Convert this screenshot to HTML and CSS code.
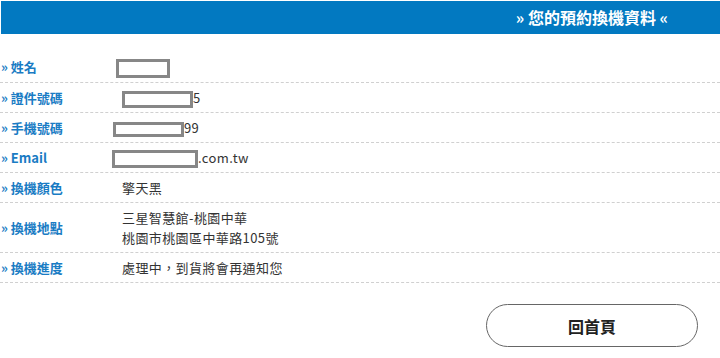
FILE: index.html
```html
<!DOCTYPE html>
<html>
<head>
    <title>您的預約換機資料</title>
    <link rel="stylesheet" href="styles.css">
</head>
<body>
    <div class="title-bar">» 您的預約換機資料 «</div>

    <div class="info-list">
        <div class="info-row">
            <div class="info-label">» 姓名</div>
            <div class="info-value"><span class="mask mask-name"></span></div>
        </div>
        <div class="info-row">
            <div class="info-label">» 證件號碼</div>
            <div class="info-value"><span class="mask mask-id"></span>5</div>
        </div>
        <div class="info-row">
            <div class="info-label">» 手機號碼</div>
            <div class="info-value"><span class="mask mask-phone"></span>99</div>
        </div>
        <div class="info-row">
            <div class="info-label">» Email</div>
            <div class="info-value"><span class="mask mask-email"></span>.com.tw</div>
        </div>
        <div class="info-row">
            <div class="info-label">» 換機顏色</div>
            <div class="info-value">擎天黑</div>
        </div>
        <div class="info-row">
            <div class="info-label">» 換機地點</div>
            <div class="info-value">三星智慧館-桃園中華<br>桃園市桃園區中華路105號</div>
        </div>
        <div class="info-row">
            <div class="info-label">» 換機進度</div>
            <div class="info-value">處理中，到貨將會再通知您</div>
        </div>
    </div>

    <div class="actions">
        <button type="button" class="home-btn">回首頁</button>
    </div>
</body>
</html>
```

FILE: styles.css
```css
body {
    margin: 0;
    font-family: "Noto Sans CJK TC", "Liberation Sans", sans-serif;
    font-size: 13px;
    color: #333;
    background: #fff;
}
.title-bar {
    margin: 1px 0 0 1px;
    height: 33px;
    line-height: 33px;
    background-color: #0279c1;
    color: #fff;
    font-size: 16px;
    font-weight: bold;
    text-align: right;
    padding-right: 52px;
}
.info-list {
    margin-top: 18px;
}
.info-row {
    display: flex;
    align-items: center;
    padding: 5px 0 4px;
    line-height: 20px;
    border-bottom: 1px dashed #d0d0d0;
}
.info-label {
    width: 122px;
    flex-shrink: 0;
    padding-left: 1px;
    box-sizing: border-box;
    color: #1a7cc4;
    font-weight: bold;
}
.info-value {
    color: #333;
    letter-spacing: 0.4px;
}
.mask {
    display: inline-block;
    vertical-align: middle;
    border: 3px solid #878787;
    background: #fff;
    box-sizing: border-box;
}
.mask-name {
    width: 54px;
    height: 19px;
    margin-left: -6px;
}
.mask-id {
    width: 71px;
    height: 17px;
}
.mask-phone {
    width: 71px;
    height: 15px;
    margin-left: -9px;
}
.mask-email {
    width: 86px;
    height: 18px;
    margin-left: -10px;
}
.actions {
    display: flex;
    justify-content: flex-end;
    padding: 21px 22px 0 0;
}
.home-btn {
    width: 212px;
    height: 43px;
    border: 1px solid #666;
    border-radius: 22px;
    background: #fff;
    font-family: "Noto Sans CJK TC", sans-serif;
    font-size: 16px;
    font-weight: bold;
    color: #222;
    cursor: pointer;
}
```
